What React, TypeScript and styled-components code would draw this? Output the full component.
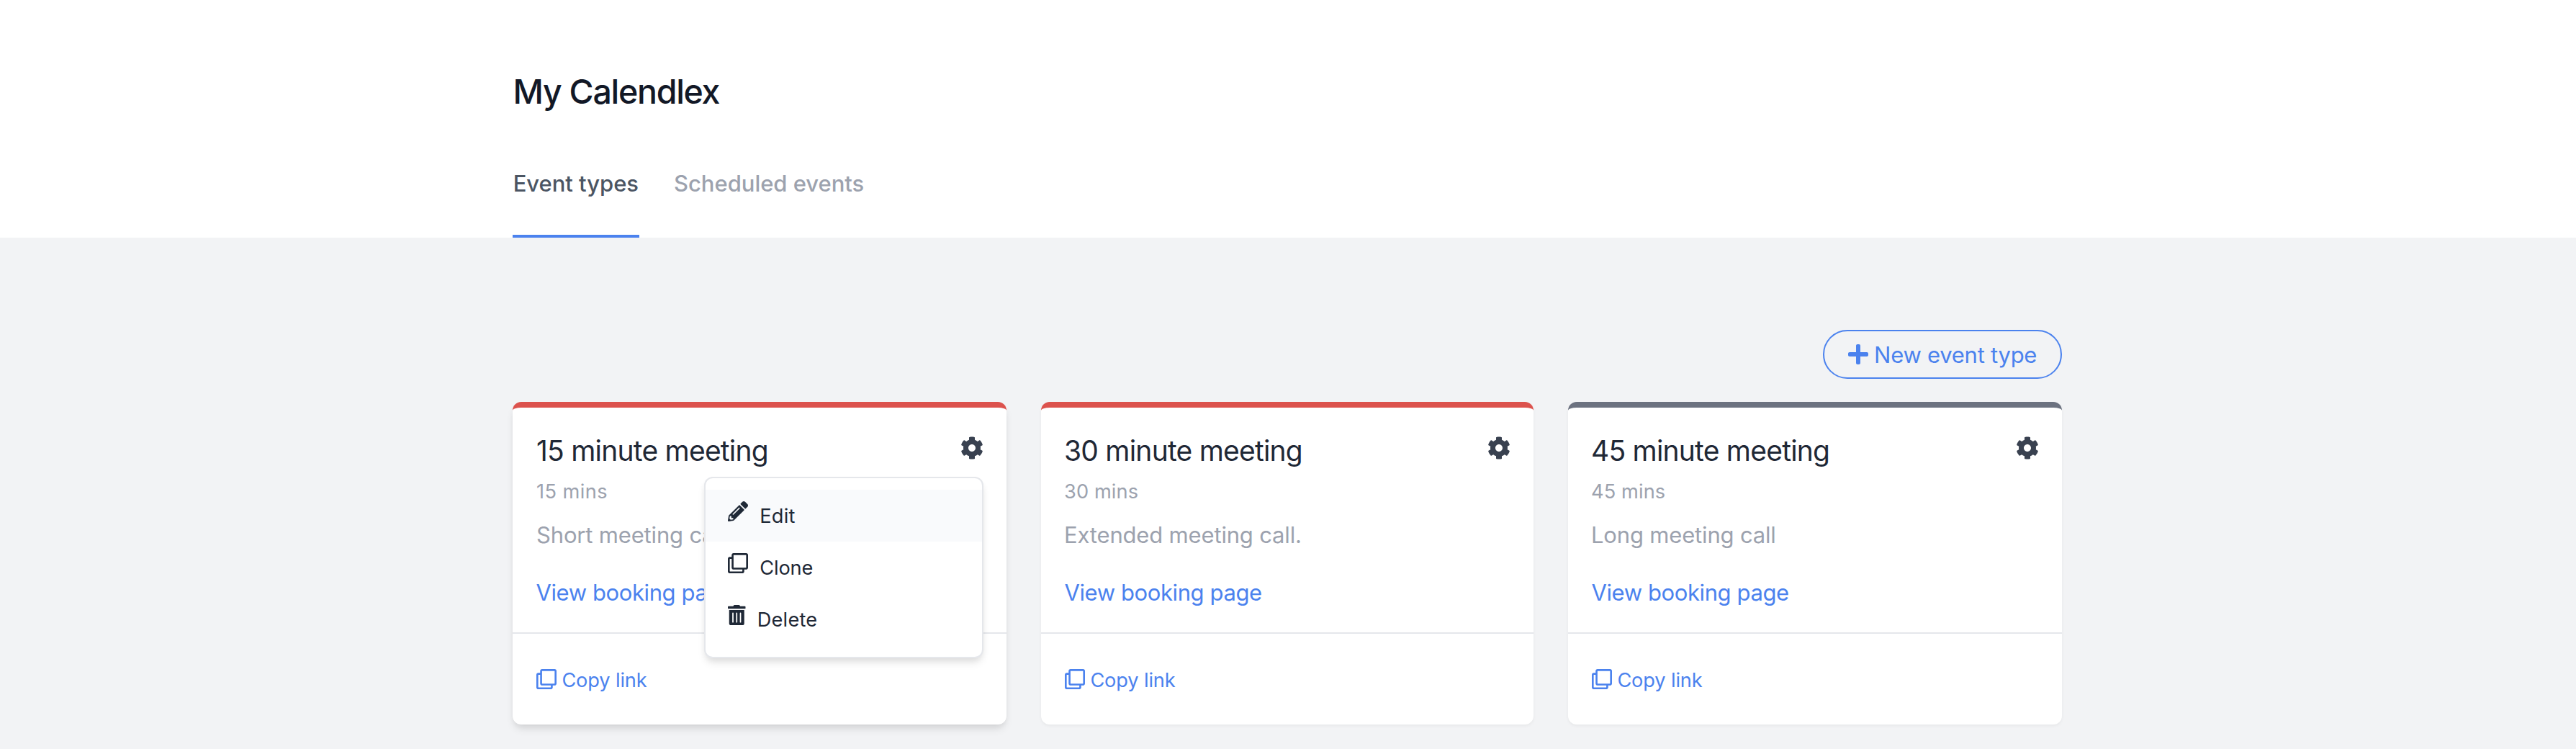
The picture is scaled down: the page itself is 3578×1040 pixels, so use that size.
import React from 'react';
import styled, { createGlobalStyle } from 'styled-components';
import { FaCog, FaPencilAlt, FaPlus, FaRegClone, FaTrashAlt } from 'react-icons/fa';

const colors = {
  blue: '#4b82ee',
  red: '#dc524d',
  slate: '#6c7280',
  page: '#f2f3f5',
  line: '#e5e7eb',
  ink: '#1f2836',
  heading: '#121826',
  muted: '#9ca2ae',
};

const GlobalStyle = createGlobalStyle`
  *, *::before, *::after { box-sizing: border-box; }
  body {
    margin: 0;
    min-height: 1040px;
    overflow: hidden;
    background: ${colors.page};
    font-family: Inter, 'Liberation Sans', sans-serif;
    color: ${colors.ink};
    -webkit-font-smoothing: antialiased;
  }
  h1, h2, p { margin: 0; }
`;

const Header = styled.header`
  height: 330px;
  padding: 95px 714px 0 712px;
  background: #fff;
`;

const PageTitle = styled.h1`
  padding-left: 0.5px;
  font-size: 46.5px;
  line-height: 64px;
  font-weight: 500;
  letter-spacing: -1.28px;
  color: ${colors.heading};
`;

const Tabs = styled.nav`
  display: flex;
  gap: 48px;
  margin-top: 72px;
`;

const Tab = styled.a<{ $active?: boolean }>`
  height: 99px;
  font-size: 31px;
  line-height: 48px;
  font-weight: 500;
  letter-spacing: -0.03px;
  white-space: nowrap;
  min-width: 176px;
  padding-left: ${(p) => (p.$active ? '0.7px' : '0')};
  color: ${(p) => (p.$active ? '#4b5563' : colors.muted)};
  border-bottom: 4px solid ${(p) => (p.$active ? colors.blue : 'transparent')};
`;

const Main = styled.main`
  padding: 128px 714px 34px 712px;
`;

const Actions = styled.div`
  display: flex;
  justify-content: flex-end;
  margin-bottom: 32px;
`;

const NewButton = styled.a`
  display: flex;
  width: 332px;
  height: 68px;
  padding: 8px 32px;
  border: 2px solid ${colors.blue};
  border-radius: 34px;
  font-size: 31px;
  line-height: 50px;
  letter-spacing: -0.26px;
  white-space: nowrap;
  color: ${colors.blue};

  svg {
    width: 28px;
    height: 32px;
    margin: 8px 8.6px 0 0.5px;
    flex: none;
  }
`;

const Grid = styled.section`
  display: grid;
  grid-template-columns: 686px 684px 686px;
  gap: 48px;
`;

const Card = styled.article<{ $accent: string; $raised?: boolean }>`
  position: relative;
  height: 448px;
  background: #fff;
  border-top: 8px solid ${(p) => p.$accent};
  border-radius: 12px;
  box-shadow: ${(p) =>
    p.$raised
      ? '0 8px 12px -2px rgba(0,0,0,.1), 0 4px 8px -2px rgba(0,0,0,.06)'
      : '0 2px 4px rgba(0,0,0,.05)'};
`;

const CardBody = styled.div`
  height: 314px;
  padding: 32px;
  border-bottom: 2px solid ${colors.line};
`;

const CardHead = styled.div`
  display: flex;
  justify-content: space-between;
`;

const CardTitle = styled.h2<{ $inset: number }>`
  padding-left: ${(p) => p.$inset}px;
  font-size: 39px;
  line-height: 56px;
  font-weight: 400;
  letter-spacing: -0.78px;
`;

const Gear = styled(FaCog)`
  width: 32px;
  height: 32px;
  margin-top: 8px;
  color: #394150;
`;

const Duration = styled.p<{ $spacing: string; $inset: number }>`
  height: 40px;
  margin-top: 8px;
  padding-left: ${(p) => p.$inset}px;
  font-size: 27.2px;
  line-height: 42px;
  letter-spacing: ${(p) => p.$spacing};
  color: ${colors.muted};
`;

const Description = styled.p<{ $inset: number }>`
  height: 48px;
  margin-top: 16px;
  padding-left: ${(p) => p.$inset}px;
  font-size: 31px;
  line-height: 49px;
  letter-spacing: -0.17px;
  color: ${colors.muted};
`;

const BookingLink = styled.a`
  display: block;
  margin-top: 32px;
  padding-left: 0.5px;
  font-size: 31px;
  line-height: 49px;
  letter-spacing: -0.4px;
  color: ${colors.blue};
`;

const CardFooter = styled.div`
  padding: 44px 32px 0;
`;

const CopyLink = styled.a`
  display: flex;
  font-size: 27.2px;
  line-height: 42px;
  letter-spacing: -0.13px;
  color: ${colors.blue};

  svg {
    width: 28px;
    height: 28px;
    margin: 5.4px 7.7px 0 0.7px;
  }
`;

const Menu = styled.div`
  position: absolute;
  z-index: 2;
  top: 96px;
  right: 32px;
  width: 388px;
  padding: 16px 0;
  background: #fff;
  border: 2px solid ${colors.line};
  border-radius: 12px;
  box-shadow: 0 8px 12px -2px rgba(0, 0, 0, 0.1), 0 4px 8px -2px rgba(0, 0, 0, 0.06);
`;

const MenuItem = styled.a<{ $active?: boolean; $spacing: string; $icon?: number }>`
  display: flex;
  height: 72px;
  padding: 16px 31.4px;
  font-size: 27.2px;
  line-height: 42px;
  letter-spacing: ${(p) => p.$spacing};
  background: ${(p) => (p.$active ? '#f9fafc' : 'transparent')};

  svg {
    width: ${(p) => p.$icon ?? 28}px;
    height: 28px;
    margin-right: 15.8px;
    margin-top: -0.5px;
    flex: none;
  }
`;

const events = [
  { title: '15 minute meeting', mins: '15 mins', spacing: '0.44px', inset: 1, text: 'Short meeting call', accent: colors.red, open: true },
  { title: '30 minute meeting', mins: '30 mins', spacing: '0.1px', inset: 0, text: 'Extended meeting call.', accent: colors.red },
  { title: '45 minute meeting', mins: '45 mins', spacing: '0.1px', inset: 0, text: 'Long meeting call', accent: colors.slate },
];

function EventMenu() {
  return (
    <Menu>
      <MenuItem $active $spacing="0.24px">
        <FaPencilAlt />
        Edit
      </MenuItem>
      <MenuItem $spacing="-0.12px">
        <FaRegClone />
        Clone
      </MenuItem>
      <MenuItem $spacing="0.23px" $icon={24.5}>
        <FaTrashAlt />
        Delete
      </MenuItem>
    </Menu>
  );
}

export default function App() {
  return (
    <>
      <GlobalStyle />
      <Header>
        <PageTitle>My Calendlex</PageTitle>
        <Tabs>
          <Tab $active>Event types</Tab>
          <Tab>Scheduled events</Tab>
        </Tabs>
      </Header>
      <Main>
        <Actions>
          <NewButton>
            <FaPlus />
            New event type
          </NewButton>
        </Actions>
        <Grid>
          {events.map((e) => (
            <Card key={e.title} $accent={e.accent} $raised={e.open}>
              <CardBody>
                <CardHead>
                  <CardTitle $inset={e.inset}>{e.title}</CardTitle>
                  <Gear />
                </CardHead>
                <Duration $spacing={e.spacing} $inset={e.inset}>{e.mins}</Duration>
                <Description $inset={e.inset}>{e.text}</Description>
                <BookingLink>View booking page</BookingLink>
              </CardBody>
              <CardFooter>
                <CopyLink>
                  <FaRegClone />
                  Copy link
                </CopyLink>
              </CardFooter>
              {e.open && <EventMenu />}
            </Card>
          ))}
        </Grid>
      </Main>
    </>
  );
}
